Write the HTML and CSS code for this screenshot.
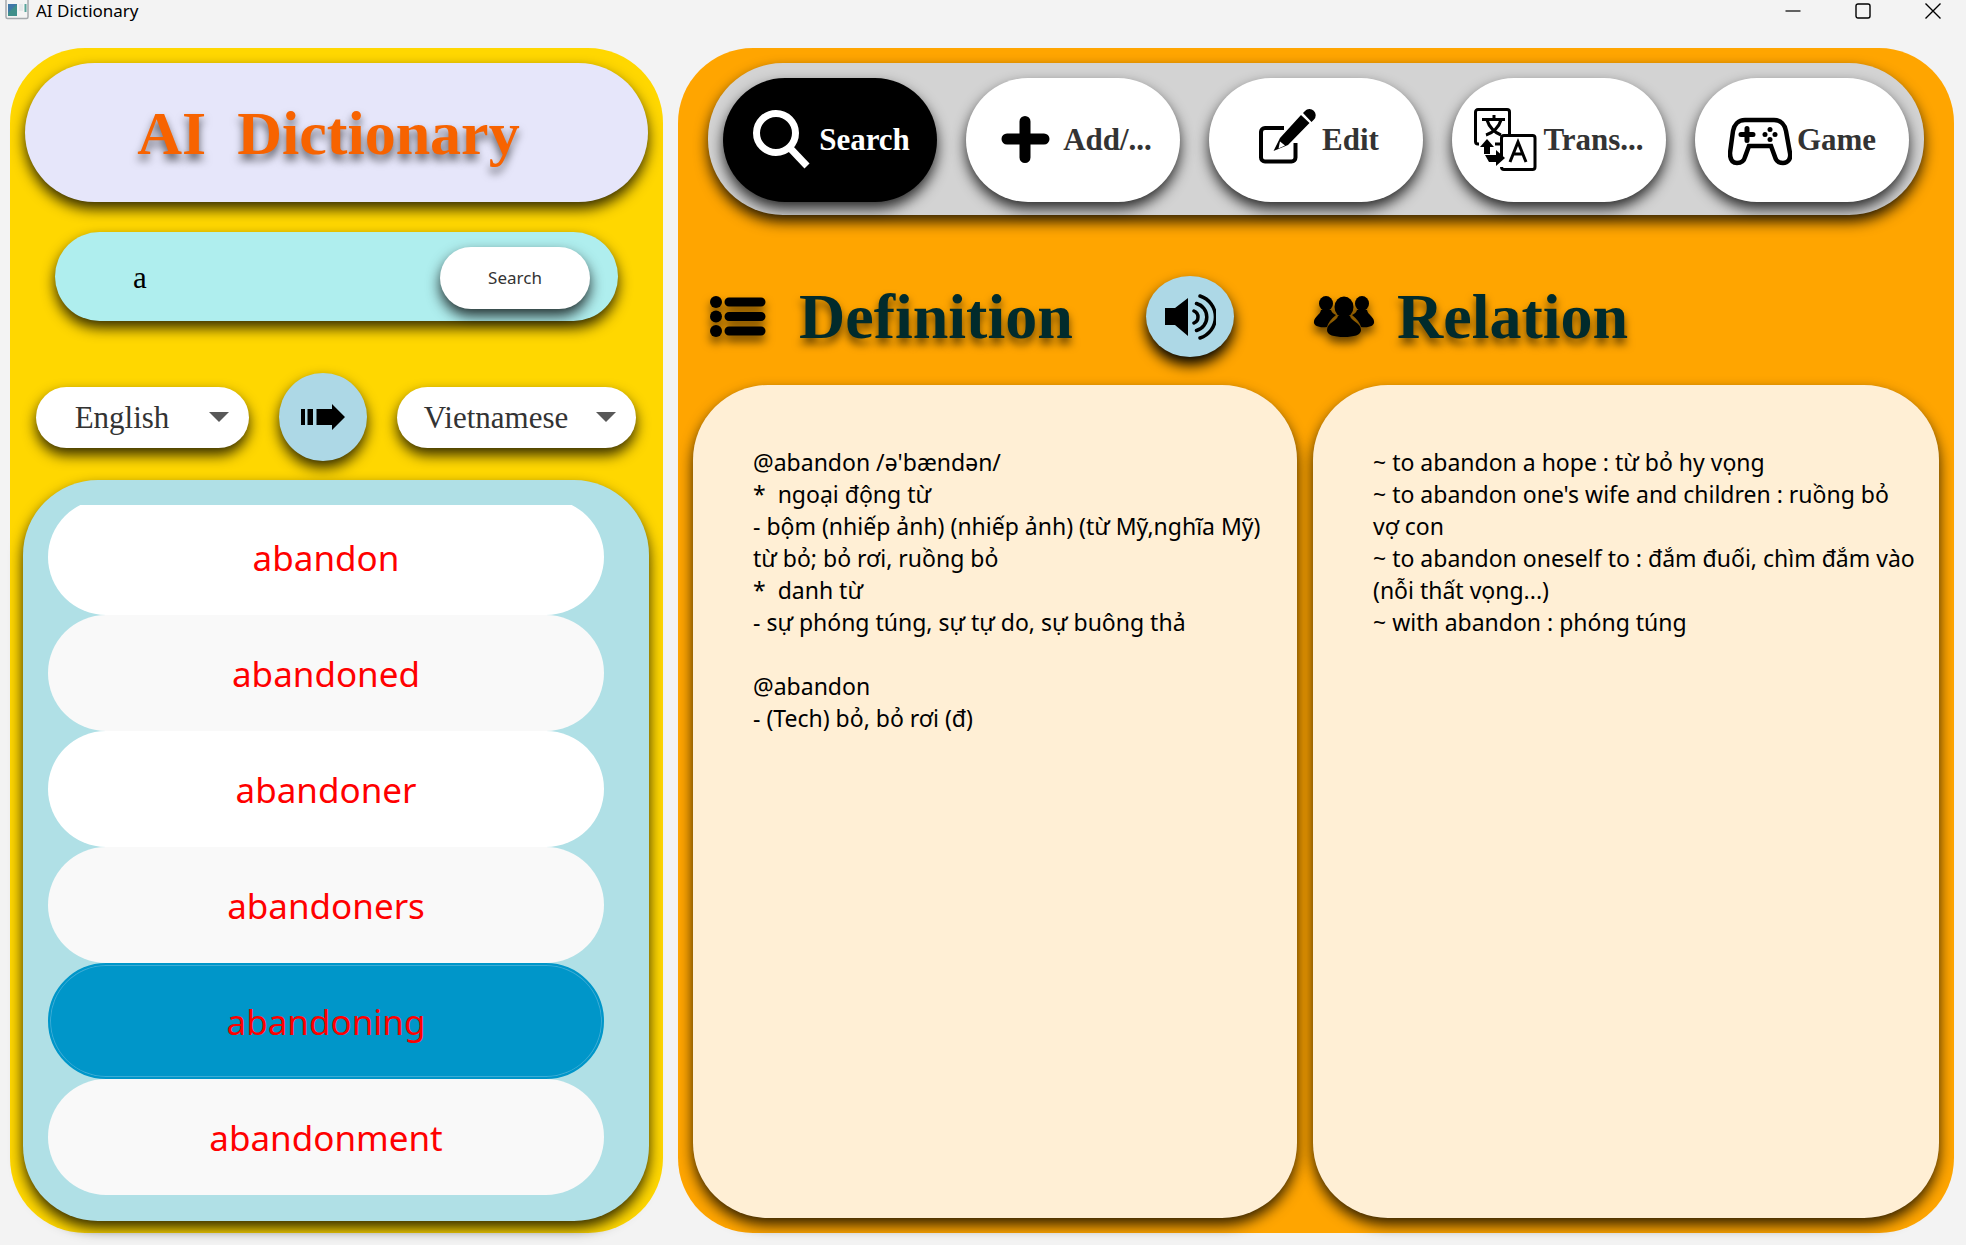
FILE: index.html
```html
<!DOCTYPE html>
<html lang="en">
<head>
<meta charset="utf-8">
<title>AI Dictionary</title>
<link rel="stylesheet" href="styles.css">
</head>
<body>
<header class="titlebar">
  <svg class="app-icon" width="24" height="20" viewBox="0 0 24 20" aria-hidden="true">
    <rect x="1" y="-2" width="22" height="20.500" rx="1.500" fill="#f4f4f4" stroke="#a5a9ad" stroke-width="1.500"/>
    <rect x="3" y="4" width="9" height="12" fill="#3f8f8a"/>
    <path d="M3 4h9L3 13z" fill="#3f78a8"/>
    <rect x="14" y="4" width="4" height="7" fill="#e6e9ea"/>
    <rect x="19.500" y="4" width="2" height="8" fill="#5aa59c"/>
  </svg>
  <span class="titlebar-text">AI Dictionary</span>
  <div class="window-buttons">
    <button type="button" aria-label="Minimize"><svg width="16" height="16" viewBox="0 0 16 16"><path d="M0.500 8h15" stroke="#000" stroke-width="1.200"/></svg></button>
    <button type="button" aria-label="Maximize"><svg width="16" height="16" viewBox="0 0 16 16"><rect x="1" y="1" width="14" height="14" rx="2" fill="none" stroke="#000" stroke-width="1.400"/></svg></button>
    <button type="button" aria-label="Close"><svg width="16" height="16" viewBox="0 0 16 16"><path d="M0.500 0.500l15 15M15.500 0.500l-15 15" stroke="#000" stroke-width="1.400"/></svg></button>
  </div>
</header>

<main class="workspace">
  <aside class="sidebar">
    <h1 class="brand">AI  Dictionary</h1>

    <form class="search">
      <input class="search-input" type="text" value="a" aria-label="Word">
      <button class="search-button" type="button">Search</button>
    </form>

    <div class="languages">
      <div class="language language-from">
        <select aria-label="From language"><option>English</option><option>Vietnamese</option></select>
        <svg class="caret" width="20" height="10" viewBox="0 0 20 10" aria-hidden="true"><path d="M0 0h20L10 10z" fill="#585858"/></svg>
      </div>
      <button class="round-button" type="button" aria-label="Swap languages">
        <svg width="44" height="26" viewBox="0 0 44 26"><path d="M0 5h4v16H0zM6.500 5h5.500v16H6.500zM15.500 5H31V0l13 13-13 13v-5H15.500z"/></svg>
      </button>
      <div class="language language-to">
        <select aria-label="To language"><option>Vietnamese</option><option>English</option></select>
        <svg class="caret" width="20" height="10" viewBox="0 0 20 10" aria-hidden="true"><path d="M0 0h20L10 10z" fill="#585858"/></svg>
      </div>
    </div>

    <div class="word-panel">
      <ul class="words">
        <li>abandon</li>
        <li>abandoned</li>
        <li>abandoner</li>
        <li>abandoners</li>
        <li class="selected">abandoning</li>
        <li>abandonment</li>
      </ul>
    </div>
  </aside>

  <section class="content">
    <nav class="tabs">
      <button class="tab active" type="button">
        <svg width="64" height="64" viewBox="0 0 64 64" fill="none" stroke="#fff"><circle cx="26" cy="25" r="19.500" stroke-width="7"/><path d="M39 39l18 19" stroke-width="7"/></svg>
        Search
      </button>
      <button class="tab" type="button">
        <svg width="64" height="64" viewBox="0 0 64 64" stroke="#000" stroke-width="11" stroke-linecap="round"><path d="M31 13.500v36M13 31h37"/></svg>
        Add/...
      </button>
      <button class="tab" type="button">
        <svg width="64" height="64" viewBox="0 0 64 64"><path d="M31 20H12a4 4 0 0 0-4 4V49.500a4 4 0 0 0 4 4H38.500a4 4 0 0 0 4-4V35" fill="none" stroke="#000" stroke-width="4"/><path d="M27 30L48 7l8.500 8L35 37l-14.500 6zM50 5l2-2a6 6 0 0 1 9 8.500l-2.500 2.500z"/><path d="M27 33.500l5 4-6.500 3z" fill="#fff"/></svg>
        Edit
      </button>
      <button class="tab" type="button">
        <svg width="64" height="64" viewBox="0 0 64 64"><g fill="none" stroke="#000" stroke-width="3"><path d="M5 36H4a2.500 2.500 0 0 1-2.500-2.500V4A2.500 2.500 0 0 1 4 1.500h29A2.500 2.500 0 0 1 35.500 4v22M21 36h6"/><path d="M27.500 51V30a2.500 2.500 0 0 1 2.500-2.500h28.500A2.500 2.500 0 0 1 61 30v29a2.500 2.500 0 0 1-2.500 2.500H30a2.500 2.500 0 0 1-2.500-2.500"/><path d="M8 11.500h23M20 7v4M13 12c2 7 8 13 14 15M27 12c-2 7-8 13-15 15M36 54l8-20 8 20M39 46h10"/></g><path d="M13 31l7 8h-4v7h-6v-7H6zM31 50l-9 8v-4h-7l-4-7h11v-5z"/></svg>
        Trans...
      </button>
      <button class="tab" type="button">
        <svg width="64" height="64" viewBox="0 0 64 64"><path d="M17 12h29c7 0 11 5 12 11l4 22c1 6-2 10-7 10-4 0-7-2-8-6l-4-11H21l-4 11c-1 4-4 6-8 6-5 0-7-4-7-10l3-22c1-6 5-11 12-11z" fill="none" stroke="#000" stroke-width="4.500"/><path d="M19 20.500v12M13 26.500h12" stroke="#000" stroke-width="5" stroke-linecap="round"/><circle cx="42" cy="21.500" r="2.500"/><circle cx="42" cy="31.500" r="2.500"/><circle cx="37" cy="26.500" r="2.500"/><circle cx="47" cy="26.500" r="2.500"/></svg>
        Game
      </button>
    </nav>

    <div class="columns">
      <section class="column column-definition">
        <div class="heading">
          <svg class="heading-icon" width="64" height="64" viewBox="0 0 64 64"><path d="M21 17h32M21 31.500h32M21 46h32" stroke="#000" stroke-width="9" stroke-linecap="round"/><circle cx="8" cy="17" r="6"/><circle cx="8" cy="31.500" r="6"/><circle cx="8" cy="46" r="6"/></svg>
          <h2>Definition</h2>
          <button class="round-button speaker" type="button" aria-label="Listen">
            <svg width="52" height="46" viewBox="0 0 52 46"><path d="M1 14h10L24 4v38L11 31H1z"/><path d="M30 17a6.500 6.500 0 0 1 0 12M32.500 9.500a14 14 0 0 1 0 27M36 2a22 22 0 0 1 0 42" fill="none" stroke="#000" stroke-width="3.500" stroke-linecap="round"/></svg>
          </button>
        </div>
        <div class="paper">@abandon /ə'bændən/
*  ngoại động từ
- bộm (nhiếp ảnh) (nhiếp ảnh) (từ Mỹ,nghĩa Mỹ) từ bỏ; bỏ rơi, ruồng bỏ
*  danh từ
- sự phóng túng, sự tự do, sự buông thả

@abandon
- (Tech) bỏ, bỏ rơi (đ)</div>
      </section>

      <section class="column column-relation">
        <div class="heading">
          <svg class="heading-icon" width="64" height="64" viewBox="0 0 64 64"><g id="person"><ellipse cx="13" cy="18.500" rx="7" ry="7.500"/><path d="M8 25h10c1 3 3 4 5 5-5 4-8 8-9 12-8 1-14-1-13-6 1-5 6-6 7-11z"/></g><use href="#person" transform="matrix(-1 0 0 1 62 0)"/><ellipse cx="31" cy="22" rx="9.500" ry="10.500"/><path d="M25 31h12c1 5 11 7 11 14 0 5-7 7-17 7s-17-2-17-7c0-7 10-9 11-14z"/></svg>
          <h2>Relation</h2>
        </div>
        <div class="paper">~ to abandon a hope : từ bỏ hy vọng
~ to abandon one's wife and children : ruồng bỏ vợ con
~ to abandon oneself to : đắm đuối, chìm đắm vào (nỗi thất vọng...)
~ with abandon : phóng túng</div>
      </section>
    </div>
  </section>
</main>
</body>
</html>
```
FILE: styles.css
```css
* {
  box-sizing: border-box;
}

body {
  margin: 0;
  min-height: 100vh;
  display: flex;
  flex-direction: column;
  background: #f3f3f3;
  font-family: "Noto Sans", "Open Sans", sans-serif;
  color: #000;
}

button {
  border: 0;
  padding: 0;
  font: inherit;
  cursor: pointer;
}

svg {
  display: block;
  flex: none;
}

/* Title bar */
.titlebar {
  display: flex;
  align-items: flex-start;
  height: 48px;
  padding: 0 25px 0 5px;
  font-size: 17px;
  line-height: 22px;
}

.titlebar-text {
  margin-left: 7px;
}

.window-buttons {
  display: flex;
  gap: 54px;
  margin-left: auto;
  padding-top: 3px;
}

.window-buttons button {
  background: none;
}

/* Two main panels */
.workspace {
  flex: 1;
  display: grid;
  grid-template-columns: 653fr 1276fr;
  gap: 15px;
  padding: 0 12px 12px 10px;
}

.sidebar,
.content {
  display: flex;
  flex-direction: column;
  border-radius: 75px;
  min-width: 0;
}

.sidebar {
  padding: 15px 14px 12px 13px;
  background: #ffd700;
}

.content {
  padding: 15px;
  background: #ffa500;
}

.brand,
.search,
.search-button,
.language select,
.round-button,
.word-panel,
.tabs,
.tab,
.paper {
  box-shadow: 0 7px 14px rgba(0, 0, 0, 0.8);
}

/* Sidebar */
.brand {
  display: flex;
  align-items: center;
  justify-content: center;
  height: 139px;
  margin: 0 1px 0 2px;
  padding-right: 16px;
  border-radius: 70px;
  background: #e6e6fa;
  color: #f76300;
  font: bold 62px/70px "Liberation Serif", serif;
  white-space: pre;
  text-shadow: 0 6px 8px rgba(0, 0, 0, 0.6);
}

.search {
  display: flex;
  align-items: center;
  height: 89px;
  margin: 30px 31px 0 32px;
  padding: 2px 28px 0 78px;
  border-radius: 45px;
  background: #afeeee;
}

.search-input {
  flex: 1;
  min-width: 0;
  border: 0;
  padding: 0;
  background: none;
  font: 31px/40px "Liberation Serif", serif;
}

.search-button {
  width: 150px;
  height: 62px;
  border-radius: 31px;
  background: #fff;
  color: #333;
  font-size: 17px;
}

.languages {
  display: grid;
  grid-template-columns: 213fr 88px 239fr;
  align-items: center;
  gap: 30px;
  margin: 52px 13px 19px 13px;
}

.language {
  position: relative;
}

.language select {
  appearance: none;
  display: block;
  width: 100%;
  height: 61px;
  border: 0;
  border-radius: 31px;
  padding: 2px 41px 0 0;
  background: #fff;
  color: #333;
  font: 31px/40px "Liberation Serif", serif;
  text-align: center;
  text-align-last: center;
}

.caret {
  position: absolute;
  top: 25px;
  right: 20px;
  pointer-events: none;
}

.round-button {
  display: flex;
  align-items: center;
  justify-content: center;
  width: 88px;
  height: 88px;
  border-radius: 50%;
  background: #add8e6;
}

.word-panel {
  flex: 1;
  padding: 25px 45px 25px 25px;
  border-radius: 75px;
  background: #b0e0e6;
}

.words {
  height: 690px;
  margin: 0;
  padding: 0;
  overflow: hidden;
  display: flex;
  flex-direction: column;
  justify-content: flex-end;
  list-style: none;
}

.words li {
  flex: none;
  display: flex;
  align-items: center;
  justify-content: center;
  height: 116px;
  border-radius: 58px;
  background: #fff;
  color: #f00;
  font-size: 35px;
}

.words li:nth-child(even) {
  background: #f9f9f9;
}

.words .selected {
  border: 2px solid #0096c9;
  background: #0096c9;
  box-shadow: inset 0 0 0 1px #3cacd5;
}

/* Tabs */
.tabs {
  display: grid;
  grid-template-columns: repeat(5, 1fr);
  gap: 29px;
  margin: 0 15px;
  padding: 15px 15px 13px;
  border-radius: 75px;
  background: #d3d3d3;
}

.tab {
  display: flex;
  align-items: center;
  justify-content: center;
  gap: 5px;
  height: 124px;
  border-radius: 62px;
  background: #fff;
  color: #333;
  font: bold 31px/40px "Liberation Serif", serif;
}

.tab.active {
  background: #000;
  color: #fff;
}

/* Definition and relation */
.columns {
  flex: 1;
  display: grid;
  grid-template-columns: 604fr 626fr;
  gap: 16px;
  padding-top: 61px;
}

.column {
  display: flex;
  flex-direction: column;
  min-width: 0;
}

.heading {
  display: flex;
  align-items: center;
  height: 81px;
  margin-bottom: 28px;
}

.column-definition .heading {
  padding-left: 15px;
}

.heading-icon {
  filter: drop-shadow(0 6px 5px rgba(0, 0, 0, 0.6));
}

.heading h2 {
  margin: 0 0 0 20px;
  color: #012b2c;
  font: bold 64px/72px "Liberation Serif", serif;
  text-shadow: 0 6px 8px rgba(0, 0, 0, 0.6);
}

.column-definition h2 {
  margin-left: 27px;
}

.speaker {
  height: 81px;
  margin: 0 63px 0 auto;
  box-shadow: 0 8px 14px #000;
}

.paper {
  flex: 1;
  padding: 61px 22px 61px 60px;
  border-radius: 75px;
  background: #ffefd5;
  font-size: 23px;
  line-height: 32px;
  white-space: pre-wrap;
}
```
